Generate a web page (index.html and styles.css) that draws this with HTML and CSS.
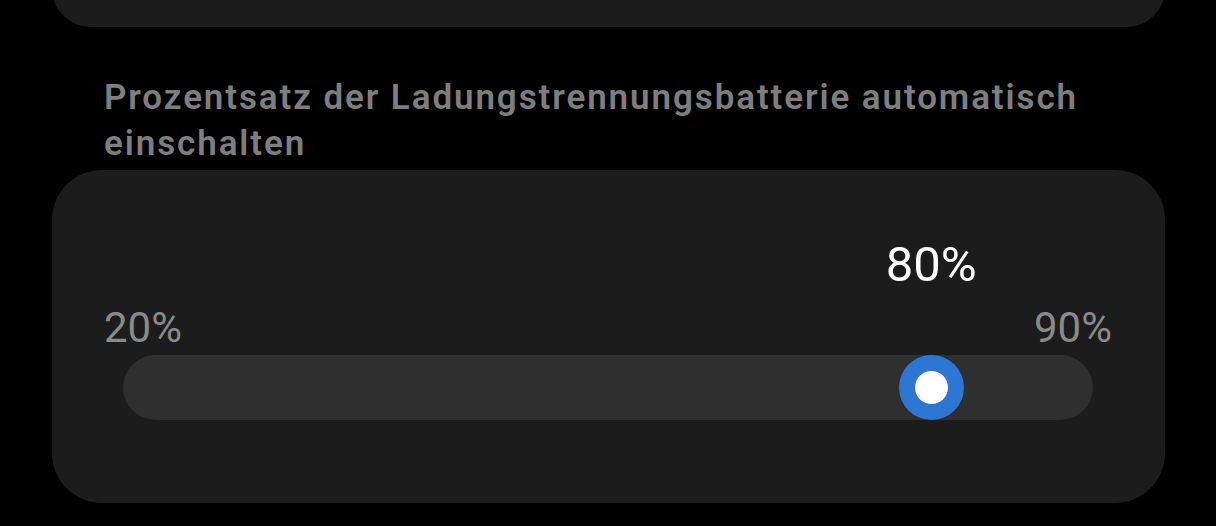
FILE: index.html
```html
<!DOCTYPE html>
<html lang="de">
<head>
<meta charset="utf-8">
<link rel="stylesheet" href="styles.css">
</head>
<body>
<div class="page">
  <div class="card card-top"></div>
  <h2 class="section-title">Prozentsatz der Ladungstrennungsbatterie automatisch einschalten</h2>
  <div class="card card-slider">
    <div class="value-row">
      <div class="value-track">
        <span class="value-label" style="left: 85.71%">80%</span>
      </div>
    </div>
    <div class="range-labels">
      <span class="range-min">20%</span>
      <span class="range-max">90%</span>
    </div>
    <div class="slider">
      <div class="track">
        <div class="thumb-rail">
          <div class="thumb" style="left: 85.71%"><span class="thumb-dot"></span></div>
        </div>
      </div>
    </div>
  </div>
</div>
</body>
</html>
```
FILE: styles.css
```css
html, body {
  margin: 0;
  padding: 0;
  background: #000;
}
body {
  width: 1216px;
  height: 526px;
  overflow: hidden;
  font-family: Roboto, "Noto Sans", "Liberation Sans", sans-serif;
}
.page {
  padding: 0 51px 0 52px;
}
.card {
  background: #1c1c1c;
}
.card-top {
  height: 77px;
  margin-top: -50px;
  border-radius: 50px;
}
.section-title {
  margin: 48px 0 3px;
  padding: 0 0 0 52px;
  font-size: 35px;
  line-height: 46px;
  letter-spacing: 1.9px;
  font-weight: 600;
  color: #7e7e7e;
}
.card-slider {
  height: 333px;
  box-sizing: border-box;
  border-radius: 50px;
  padding: 67px 53px 0 52px;
}
.value-row {
  padding: 0 51.5px;
}
.value-track {
  position: relative;
  height: 56px;
}
.value-label {
  position: absolute;
  top: 0;
  transform: translateX(-50%);
  font-size: 49px;
  line-height: 56px;
  color: #fff;
  white-space: nowrap;
}
.range-labels {
  display: flex;
  justify-content: space-between;
  margin-top: 11px;
  font-size: 42px;
  line-height: 48px;
  color: #8a8a8a;
}
.slider {
  padding: 0 19px;
  margin-top: 3px;
}
.track {
  height: 65px;
  border-radius: 32.5px;
  background: #2f2f2f;
  padding: 0 32.5px;
}
.thumb-rail {
  position: relative;
  height: 65px;
}
.thumb {
  position: absolute;
  top: 0;
  width: 65px;
  height: 65px;
  margin-left: -32.5px;
  border-radius: 50%;
  background: #2e76d3;
  display: flex;
  align-items: center;
  justify-content: center;
}
.thumb-dot {
  width: 33px;
  height: 33px;
  border-radius: 50%;
  background: #fff;
}
```
